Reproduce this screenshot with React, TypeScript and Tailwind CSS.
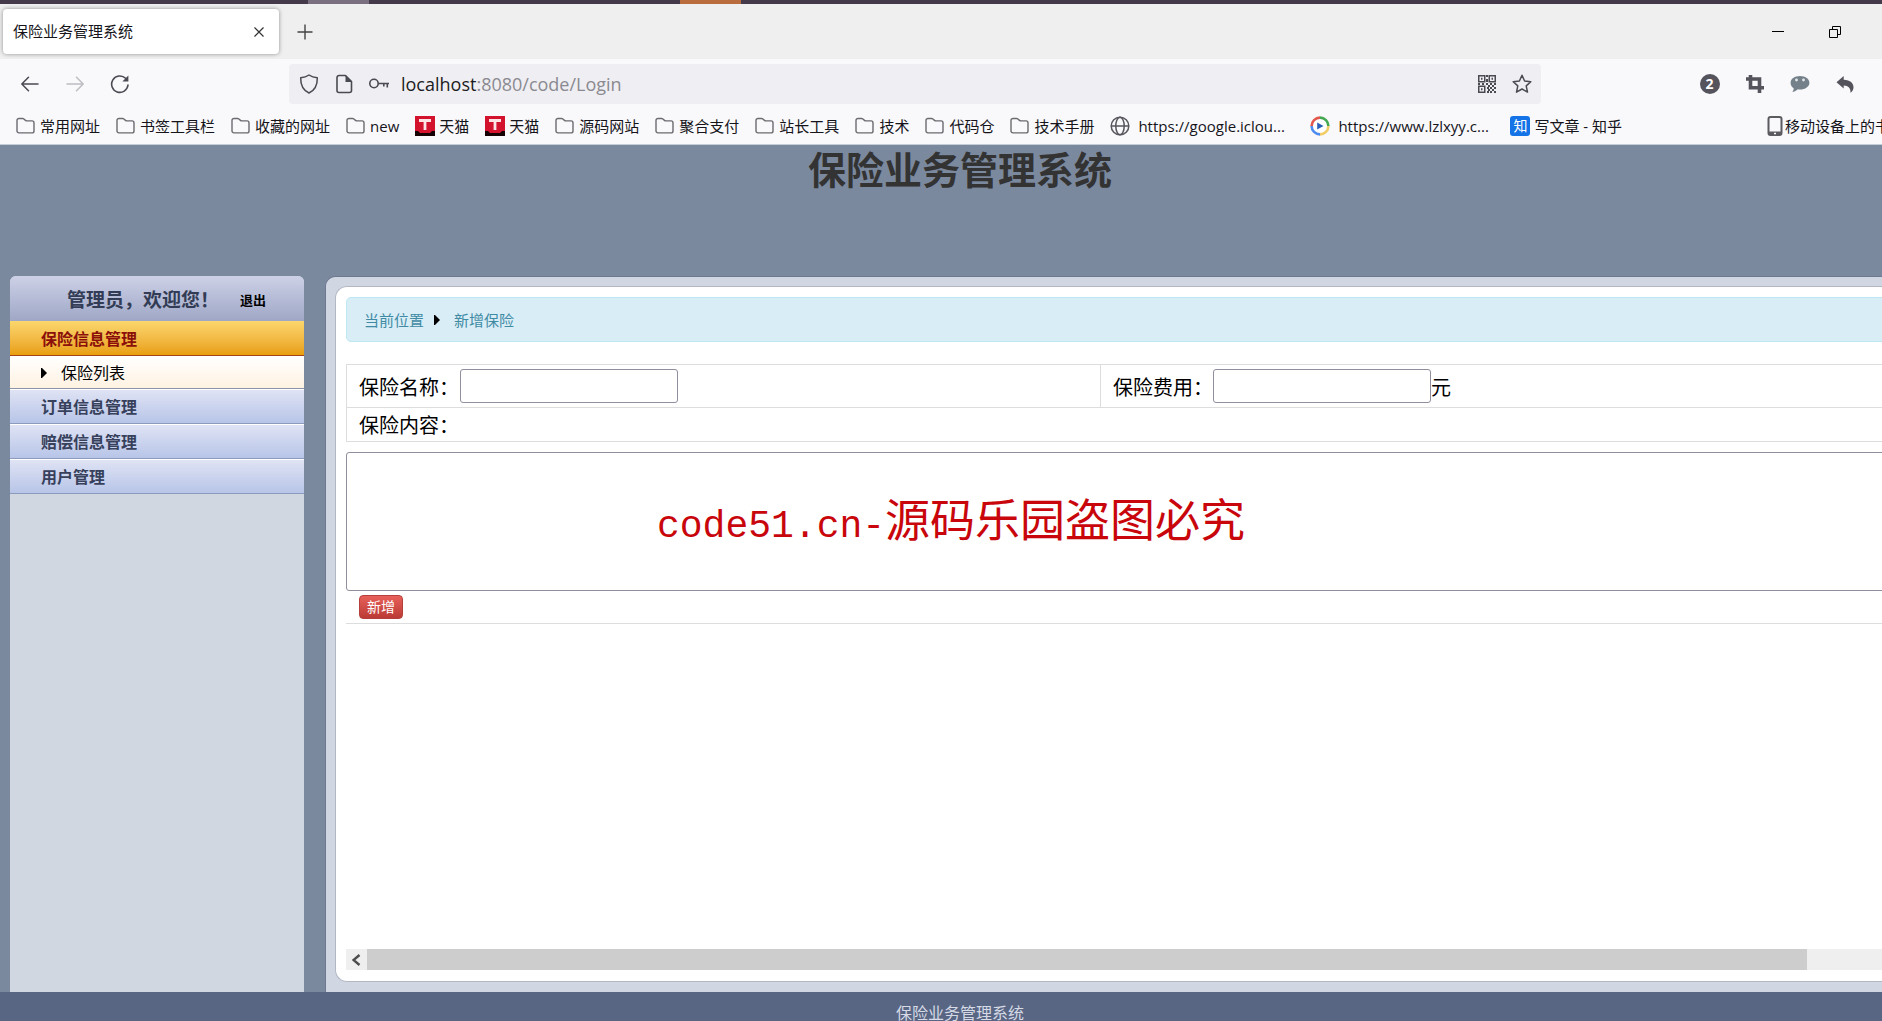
import React from 'react'

const Folder = () => (
  <svg className="w-5 h-5 shrink-0" viewBox="0 0 20 20" fill="none" stroke="#6b6b70" strokeWidth="1.4" strokeLinejoin="round">
    <path d="M1 4.500a2 2 0 0 1 2-2h3.600a2 2 0 0 1 1.300.5l1.600 1.400a2 2 0 0 0 1.300.5H16a2 2 0 0 1 2 2v8a2 2 0 0 1-2 2H3a2 2 0 0 1-2-2z" />
  </svg>
)

const Tmall = () => (
  <svg className="w-5 h-5 shrink-0" viewBox="0 0 20 20">
    <rect width="20" height="20" fill="#d3122e" />
    <path d="M0 15h3l2 2h10l2-2h3v5H0z" fill="#150004" />
    <path d="M4 4.500h12M10 4.500V14" stroke="#ffe4e6" strokeWidth="2.8" fill="none" />
  </svg>
)

const Globe = () => (
  <svg className="w-5 h-5 shrink-0" viewBox="0 0 20 20" fill="none" stroke="#55555c" strokeWidth="1.5">
    <circle cx="10" cy="10" r="8.8" />
    <ellipse cx="10" cy="10" rx="4.2" ry="8.8" />
    <path d="M1.200 10h17.600" />
  </svg>
)

const Player = () => (
  <svg className="w-5 h-5 shrink-0" viewBox="0 0 20 20" fill="none" strokeWidth="2.6">
    <circle cx="10" cy="10" r="8.5" fill="#fff" stroke="none" />
    <path d="M1.600 10A8.400 8.400 0 0 1 10 1.600" stroke="#e2574c" />
    <path d="M10 1.600A8.400 8.400 0 0 1 18.400 10" stroke="#45a852" />
    <path d="M18.400 10A8.400 8.400 0 0 1 10 18.400" stroke="#f2cd66" />
    <path d="M10 18.400A8.400 8.400 0 0 1 1.600 10" stroke="#4f8cf0" />
    <path d="M7.200 6.400v7.200l6.300-3.600z" fill="#2c5fb8" />
  </svg>
)

const Zhihu = () => (
  <span className="w-5 h-5 shrink-0 rounded-[3px] bg-[#1473e6] text-white text-[14px] leading-5 text-center">知</span>
)

const bookmarks = [
  { icon: Folder, label: '常用网址' },
  { icon: Folder, label: '书签工具栏' },
  { icon: Folder, label: '收藏的网址' },
  { icon: Folder, label: 'new' },
  { icon: Tmall, label: '天猫' },
  { icon: Tmall, label: '天猫' },
  { icon: Folder, label: '源码网站' },
  { icon: Folder, label: '聚合支付' },
  { icon: Folder, label: '站长工具' },
  { icon: Folder, label: '技术' },
  { icon: Folder, label: '代码仓' },
  { icon: Folder, label: '技术手册' },
  { icon: Globe, label: 'https://google.iclou...', wide: true },
  { icon: Player, label: 'https://www.lzlxyy.c...', wide: true },
  { icon: Zhihu, label: '写文章 - 知乎' }
]

const menu = ['订单信息管理', '赔偿信息管理', '用户管理']

const TabBar = () => (
  <div className="flex items-center h-[55px] bg-[#efefef] pl-[3px]">
    <div className="flex items-center justify-between w-[276px] h-[45px] bg-white rounded-[4px] shadow-[0_0_4px_rgba(0,0,0,0.4)] pl-[10px] pr-[14px]">
      <span className="text-[15px]">保险业务管理系统</span>
      <button aria-label="关闭标签页">
        <svg className="w-3 h-3" viewBox="0 0 12 12" stroke="#333" strokeWidth="1.2">
          <path d="M1.500 1.500l9 9M10.500 1.500l-9 9" />
        </svg>
      </button>
    </div>
    <button className="ml-[18px]" aria-label="新标签页">
      <svg className="w-4 h-4" viewBox="0 0 16 16" stroke="#444" strokeWidth="1.4">
        <path d="M8 0.500v15M0.500 8h15" />
      </svg>
    </button>
    <div className="ml-auto flex gap-[45px] pr-[79px]">
      <button aria-label="最小化">
        <svg className="w-3 h-3" viewBox="0 0 12 12" fill="none" stroke="#000">
          <path d="M0 5.500h12" />
        </svg>
      </button>
      <button aria-label="还原">
        <svg className="w-3 h-3" viewBox="0 0 12 12" fill="none" stroke="#000">
          <path d="M0.500 3.500h8v8h-8zM3.500 3.500v-3h8v8h-3" />
        </svg>
      </button>
    </div>
  </div>
)

const toolButton = 'flex items-center justify-center w-[45px] h-10'

const NavBar = () => (
  <div className="flex items-center h-[50px] pl-[7px] pr-[53px]">
    <button className={toolButton} aria-label="后退">
      <svg className="w-5 h-5" viewBox="0 0 20 20" fill="none" stroke="#4a4a52" strokeWidth="1.5" strokeLinecap="round" strokeLinejoin="round">
        <path d="M18 10H2M8.500 3.200L1.800 10l6.700 6.800" />
      </svg>
    </button>
    <button className={toolButton} aria-label="前进">
      <svg className="w-5 h-5" viewBox="0 0 20 20" fill="none" stroke="#bdbdc2" strokeWidth="1.5" strokeLinecap="round" strokeLinejoin="round">
        <path d="M2 10h16M11.500 3.200l6.700 6.800-6.700 6.800" />
      </svg>
    </button>
    <button className={toolButton} aria-label="刷新">
      <svg className="w-5 h-5" viewBox="0 0 20 20" fill="none" stroke="#4a4a52" strokeWidth="1.6" strokeLinecap="round">
        <path d="M18 11A8.200 8.200 0 1 1 15.600 4.300" />
        <path d="M18.400 1.600v6h-6z" fill="#4a4a52" stroke="none" />
      </svg>
    </button>
    <div className="flex items-center flex-1 h-10 ml-[147px] mr-[146px] pl-[10px] pr-[9px] rounded-[4px] bg-[#efeef3]">
      <svg className="w-5 h-5" viewBox="0 0 20 20" fill="none" stroke="#4a4a52" strokeWidth="1.5" strokeLinejoin="round">
        <path d="M10 1c2.400 1.700 5.200 2.500 8.300 2.700C18.500 10.500 16.200 16 10 19 3.800 16 1.500 10.500 1.700 3.700 4.800 3.500 7.600 2.700 10 1z" />
      </svg>
      <svg className="w-5 h-5 ml-[15px]" viewBox="0 0 20 20" fill="none" stroke="#4a4a52" strokeWidth="1.6" strokeLinejoin="round">
        <path d="M5 1.500h6.500l6 6V16.500a2 2 0 0 1-2 2H5a2 2 0 0 1-2-2v-13a2 2 0 0 1 2-2z" />
        <path d="M11.500 1v7h6.500z" fill="#4a4a52" stroke="none" />
      </svg>
      <svg className="w-5 h-5 ml-[15px]" viewBox="0 0 20 20" fill="none" stroke="#4a4a52" strokeWidth="1.6">
        <circle cx="5" cy="9.500" r="4.200" />
        <path d="M9.200 9.500H20M14.800 9.500v3M18.300 9.500v4" />
      </svg>
      <label htmlFor="address" className="ml-[12px] text-[18px] leading-6 text-[#1c1c22]">localhost</label>
      <input
        id="address"
        type="text"
        defaultValue=":8080/code/Login"
        className="flex-1 bg-transparent text-[18px] leading-6 text-[#8a8a90] outline-none"
      />
      <svg className="w-5 h-5" viewBox="0 0 20 20" fill="none" stroke="#4a4a52" strokeWidth="1.5">
        <path d="M1.750 1.750h6v6h-6zM12.250 1.750h6v6h-6zM1.750 12.250h6v6h-6z" />
        <path d="M4 4.750h1.500M14.500 4.750H16M4 15.250h1.500M10 1v2M10 5v3M1 10h2M5 10h2M9 10h2M13 10h2M17 10h2M11 12h2M15 12h2M10 14h2M13 14h2M17 14h2M11 16h2M15 16h2M10 18h2M13 18h2M17 18h2" strokeWidth="2" />
      </svg>
      <button className="ml-[15px]" aria-label="收藏">
        <svg className="w-5 h-5" viewBox="0 0 20 20" fill="none" stroke="#4a4a52" strokeWidth="1.5" strokeLinejoin="round">
          <path d="M10 1.300l2.600 5.700 6.200.7-4.600 4.200 1.300 6.200L10 15l-5.500 3.100 1.300-6.200L1.200 7.700l6.200-.7z" />
        </svg>
      </button>
    </div>
    <button className={toolButton}>
      <span className="w-5 h-5 rounded-full bg-[#55535c] text-white text-[14px] leading-5 font-bold">2</span>
    </button>
    <button className={toolButton} aria-label="截图">
      <svg className="w-5 h-5" viewBox="0 0 20 20" fill="none" stroke="#55535c" strokeWidth="3.600">
        <path d="M5.500 1v12.800H19M1 5h13.500v14" />
      </svg>
    </button>
    <button className={toolButton} aria-label="消息">
      <svg className="w-5 h-5" viewBox="0 0 20 20">
        <path d="M10 2c5.300 0 9.400 2.800 9.400 6.700S15.300 15.500 10 15.500c-.9 0-1.500 0-2.200-.2-1.400 1.500-3.300 2.500-5.600 2.700 1-.9 1.500-2.200 1.500-3.700C1.700 13 .6 11 .6 8.700.6 4.800 4.700 2 10 2z" fill="#75818a" />
        <circle cx="6.500" cy="6" r="1.400" fill="#e4e8ea" />
        <circle cx="13.500" cy="6" r="1.400" fill="#e4e8ea" />
      </svg>
    </button>
    <button className={toolButton} aria-label="撤销">
      <svg className="w-5 h-5" viewBox="0 0 20 20" fill="#55535c">
        <path d="M1.500 8.200L8.700 2v3.800c6.800.2 9.800 3.600 9.800 7.400 0 2.500-1.200 4.300-3 5.600.3-4.600-2-7-6.800-7.200v3z" />
      </svg>
    </button>
  </div>
)

const Bookmarks = () => (
  <div className="flex items-center gap-4 h-9 pl-4 pr-[15px] pb-[2px] text-[15px] leading-5 whitespace-nowrap border-b border-[#c4ccd8]">
    {bookmarks.map(({ icon: Icon, label, wide }, index) => (
      <a key={index} href="#" className="flex items-center gap-1">
        <Icon />
        {wide ? <span className="w-[160px] pl-1">{label}</span> : <span>{label}</span>}
      </a>
    ))}
    <a href="#" className="flex items-center ml-auto">
      <svg className="w-[18px] h-5 shrink-0" viewBox="0 0 18 20" fill="none" stroke="#5b5b60" strokeWidth="2">
        <rect x="1.500" y="1" width="13" height="18" rx="2" />
        <path d="M1.500 17h13" strokeWidth="3" />
        <path d="M7 17.500h2" stroke="#fff" strokeWidth="1.500" />
      </svg>
      移动设备上的书签
    </a>
  </div>
)

const Caret = () => (
  <svg className="w-[6px] h-[10px] shrink-0" viewBox="0 0 6 10">
    <path d="M0 0h1l5 5-5 5H0z" fill="#000" />
  </svg>
)

const Sidebar = () => (
  <aside className="w-[294px] shrink-0 bg-[#d0d7e1] rounded-t-[6px] overflow-hidden">
    <div className="flex items-center h-[45px] pt-[3px] pl-[57px] bg-gradient-to-b from-[#cdd1e7] to-[#9fa7c6] font-bold">
      <span className="text-[19px] text-[#333c55]">管理员，欢迎您！</span>
      <a href="#" className="ml-[21px] pt-[2px] text-[13px] text-black">退出</a>
    </div>
    <a href="#" className="block h-[35px] pl-[31px] text-[16px] leading-[36px] font-bold text-[#8b0f0a] bg-gradient-to-b from-[#fbd76c] to-[#e99f07] border-b border-[#a5441a]">
      保险信息管理
    </a>
    <a href="#" className="flex items-center h-[33px] pt-[2px] pl-[31px] gap-[14px] text-[16px] text-black bg-gradient-to-b from-white to-[#fff2e2] border-b border-[#8e95a8]">
      <Caret />
      保险列表
    </a>
    {menu.map((item) => (
      <a
        key={item}
        href="#"
        className="block h-[35px] pl-[31px] text-[16px] leading-[34px] font-bold text-[#37415c] bg-gradient-to-b from-[#dfe3f4] to-[#b8c5e8] border-t border-t-white border-b border-b-[#8c9abd]"
      >
        {item}
      </a>
    ))}
  </aside>
)

const fieldInput = 'w-[218px] h-[34px] px-2 bg-white border border-[#8f8f9d] rounded-[3px]'

const InsuranceForm = () => (
  <form className="relative mt-[22px] text-[20px] text-black">
    <div className="grid grid-cols-[753px_1fr] border-t border-l border-[#dddddd]">
      <div className="flex items-center h-[42px] px-3">
        <label htmlFor="name" className="w-[101px] shrink-0 pt-[3px]">保险名称：</label>
        <input id="name" type="text" className={fieldInput} />
      </div>
      <div className="flex items-center h-[42px] px-3 border-l border-[#dddddd]">
        <label htmlFor="price" className="w-[100px] shrink-0 pt-[3px]">保险费用：</label>
        <input id="price" type="text" className={fieldInput} />
        <span className="pt-[3px]">元</span>
      </div>
      <div className="col-span-2 flex items-center h-[35px] px-3 border-y border-[#dddddd]">
        <label htmlFor="content" className="pt-[3px]">保险内容：</label>
      </div>
    </div>
    <textarea id="content" className="block w-full h-[139px] mt-[10px] p-2 bg-white border border-[#8f8f9d] rounded-[3px]" />
    <div className="flex items-center h-[33px] px-[13px] border-b border-[#dddddd]">
      <button type="button" className="w-11 h-6 rounded-[4px] border border-[#b5403b] bg-gradient-to-b from-[#e8605a] to-[#bb3a35] text-white text-[14px] leading-5">
        新增
      </button>
    </div>
    {/* Watermark */}
    <div className="absolute left-[311px] top-[123px] flex items-baseline text-[#c8060c] leading-[66px] whitespace-nowrap pointer-events-none">
      <span className="font-['Liberation_Mono',monospace] text-[38px]">code51.cn-</span>
      <span className="text-[45px]">源码乐园盗图必究</span>
    </div>
  </form>
)

const App = () => {
  return (
    <div className="w-full h-screen overflow-hidden font-['Open_Sans','Noto_Sans_CJK_SC',sans-serif] text-[#15141a]">
      <div className="flex flex-col w-[calc(100%+38px)] h-full">
        {/* Browser */}
        <div className="flex h-1 shrink-0 bg-[#443a4b]">
          <div className="w-[61px] ml-[308px] bg-[#7a7081]"></div>
          <div className="w-[61px] ml-[311px] bg-[#b96c3d]"></div>
        </div>
        <div className="shrink-0 bg-[#f9f9fb]">
          <TabBar />
          <NavBar />
          <Bookmarks />
        </div>

        {/* Page */}
        <div className="flex flex-col flex-1 min-h-0 bg-[#7b899f]">
          <h1 className="h-[131px] shrink-0 text-center text-[38px] leading-[48px] font-bold text-[#333333]">
            保险业务管理系统
          </h1>
          <div className="flex flex-1 min-h-0 pl-[10px]">
            <Sidebar />
            <main className="flex flex-col flex-1 min-w-0 ml-[21px] pt-[9px] pl-[9px] pb-[10px] bg-[#d0d7e3] border-t border-l border-[#6d7891] rounded-tl-[10px]">
              <div className="flex flex-col flex-1 min-h-0 pt-[10px] pl-[10px] pr-[26px] pb-[11px] bg-white border border-r-0 border-[#b3b8c5] rounded-l-[12px]">
                <nav className="flex items-center h-[45px] shrink-0 px-[17px] pt-px bg-[#d9edf7] border border-[#bce8f1] rounded-[5px] text-[15px] text-[#3f8ba3]">
                  <a href="#">当前位置</a>
                  <span className="ml-[10px] mr-[14px]">
                    <Caret />
                  </span>
                  <a href="#">新增保险</a>
                </nav>
                <InsuranceForm />
                <div className="flex h-[21px] mt-auto bg-[#efefef]">
                  <button className="flex items-center justify-center w-[21px] shrink-0" aria-label="向左滚动">
                    <svg className="w-[10px] h-3" viewBox="0 0 10 12" fill="none" stroke="#4d4d4d" strokeWidth="2.400">
                      <path d="M7.500 1L1.500 6l6 5" />
                    </svg>
                  </button>
                  <div className="w-[93%] bg-[#cdcdcd]"></div>
                </div>
              </div>
            </main>
          </div>
        </div>
        <footer className="flex items-end justify-center h-[29px] shrink-0 bg-[#596683] text-[16px] leading-4 text-[#d5dae6]">
          保险业务管理系统
        </footer>
      </div>
    </div>
  )
}

export default App
